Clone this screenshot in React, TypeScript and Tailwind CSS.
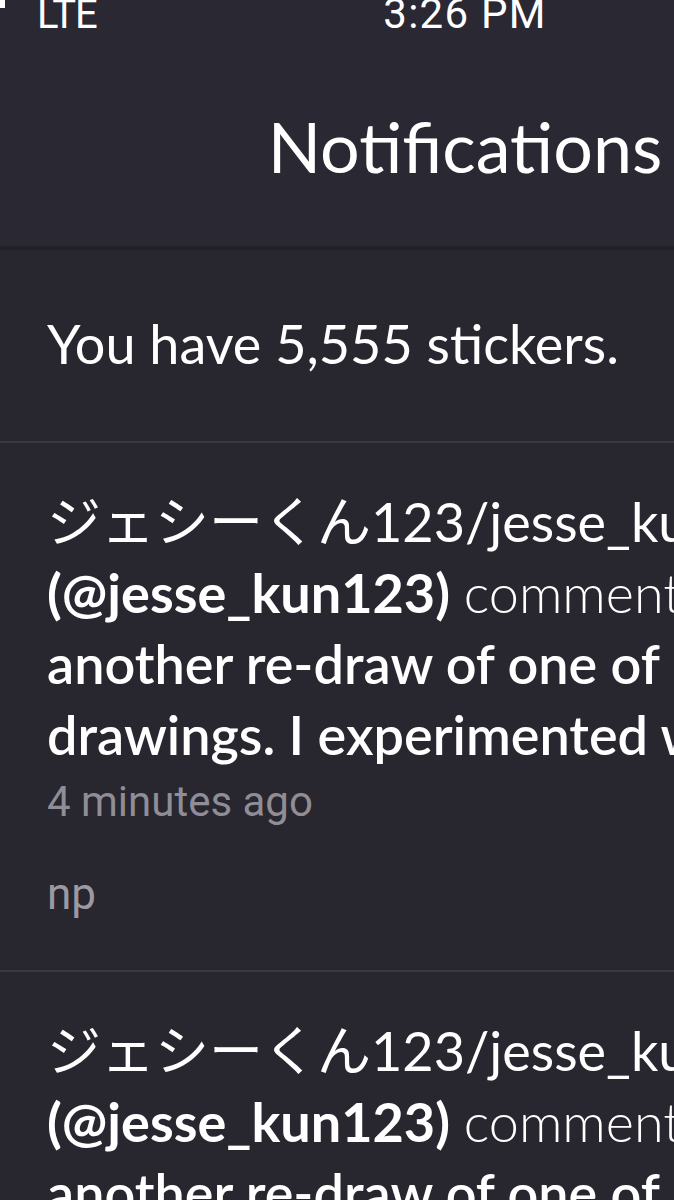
const comments = [
  {
    name: "ジェシーくん123/jesse_kun123",
    handle: "(@jesse_kun123)",
    body: ["another re-draw of one of my old", "drawings. I experimented with"],
    time: "4 minutes ago",
    reply: "np",
  },
  {
    name: "ジェシーくん123/jesse_kun123",
    handle: "(@jesse_kun123)",
    body: ["another re-draw of one of my old", "drawings. I experimented with"],
    time: "4 minutes ago",
    reply: "np",
  },
];

export default function App() {
  return (
    <div className="w-[674px] h-[1200px] overflow-hidden bg-[#28262f] text-white font-['Lato','Noto_Sans_CJK_JP',sans-serif]">
      <div className="w-[930px]">
        {/* Header */}
        <header className="bg-[#2a2833] h-[246px] flex flex-col">
          <div className="relative h-[36px] flex items-end leading-none font-['Roboto',sans-serif]">
            <span className="absolute left-0 top-0 w-[5px] h-[8px] bg-white" />
            <span className="pl-[37px] pb-[1px] text-[40px] tracking-tight">LTE</span>
            <span className="absolute left-0 right-0 bottom-[1px] text-center text-[42px] tracking-[0.03em]">3:26 PM</span>
          </div>
          <h1 className="mt-[75px] text-center text-[70px] leading-none font-normal">Notifications</h1>
        </header>
        <div className="h-[4px] bg-[#222027]" />

        {/* Sticker count */}
        <div className="px-[47px] pt-[66px] pb-[69px] border-b-2 border-[#3a3843]">
          <p className="text-[54px] leading-[56px]">You have 5,555 stickers.</p>
        </div>

        {/* Comments */}
        {comments.map((c, i) => (
          <div key={i} className="px-[47px] pt-[43px] pb-[52px] border-b-2 border-[#3a3843] whitespace-nowrap">
            <div className="text-[54px] leading-[71px]">
              <div className="font-normal">{c.name}</div>
              <div>
                <span className="font-bold">{c.handle}</span>{" "}
                <span className="font-light">commented on your post:</span>
              </div>
              {c.body.map((line) => (
                <div key={line} className="font-semibold">{line}</div>
              ))}
            </div>
            <div className="mt-[8px] text-[42px] leading-[48px] text-[#8f8d96] font-['Roboto',sans-serif]">{c.time}</div>
            <div className="mt-[44px] text-[44px] leading-[48px] text-[#9b99a2] font-['Roboto',sans-serif]">{c.reply}</div>
          </div>
        ))}
      </div>
    </div>
  );
}
